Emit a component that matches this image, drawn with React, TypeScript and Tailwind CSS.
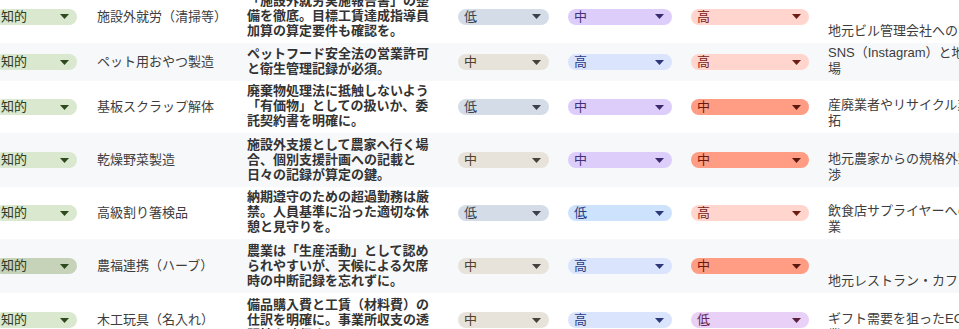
/**
 * Sheet-style task table with dropdown chips.
 * Rows alternate white / light gray; chips are pill dropdowns.
 */

type Tone = 'green' | 'greenDim' | 'slate' | 'beige' | 'violet' | 'blue' | 'sky' | 'rose' | 'coral' | 'orchid';

const tones: Record<Tone, { bg: string; fg: string; arrow: string }> = {
  green: { bg: 'bg-[#d9e8cf]', fg: 'text-[#2b3a22]', arrow: '#2d4a1c' },
  greenDim: { bg: 'bg-[#c7d3b9]', fg: 'text-[#2b3a22]', arrow: '#2d4a1c' },
  slate: { bg: 'bg-[#d4dde7]', fg: 'text-[#3b4552]', arrow: '#3b4049' },
  beige: { bg: 'bg-[#e7e3da]', fg: 'text-[#52402c]', arrow: '#45413c' },
  violet: { bg: 'bg-[#dccdfb]', fg: 'text-[#43307a]', arrow: '#3a2a6e' },
  blue: { bg: 'bg-[#dbe4fd]', fg: 'text-[#2b3c86]', arrow: '#2c3878' },
  sky: { bg: 'bg-[#cde3fd]', fg: 'text-[#2b3c86]', arrow: '#2c3878' },
  rose: { bg: 'bg-[#ffd5cd]', fg: 'text-[#7b2218]', arrow: '#6e1d14' },
  coral: { bg: 'bg-[#ff9c84]', fg: 'text-[#6a1b10]', arrow: '#5c170e' },
  orchid: { bg: 'bg-[#e8d0f6]', fg: 'text-[#6a2650]', arrow: '#5a1f3c' },
};

const Chip = ({ label, tone, width }: { label: string; tone: Tone; width: string }) => {
  const t = tones[tone];
  return (
    <div className={`flex h-4 items-center justify-between rounded-full pl-[6px] pr-[8px] ${t.bg} ${width}`}>
      <span className={`text-[13px] leading-4 ${t.fg}`}>{label}</span>
      <svg width="9" height="5" viewBox="0 0 9 5">
        <polygon points="0,0 9,0 4.5,5" fill={t.arrow} />
      </svg>
    </div>
  );
};

type Row = {
  h: string;
  cat: Tone;
  name: string;
  notes: string[];
  a: [string, Tone];
  b: [string, Tone];
  c: [string, Tone];
  plan: string[];
};

const rows: Row[] = [
  {
    h: 'h-[53px]',
    cat: 'green',
    name: '施設外就労（清掃等）',
    notes: ['「施設外就労実施報告書」の整', '備を徹底。目標工賃達成指導員', '加算の算定要件も確認を。'],
    a: ['低', 'slate'],
    b: ['中', 'violet'],
    c: ['高', 'rose'],
    plan: ['地元ビル管理会社への営業と定期契約の獲得'],
  },
  {
    h: 'h-[38px]',
    cat: 'green',
    name: 'ペット用おやつ製造',
    notes: ['ペットフード安全法の営業許可', 'と衛生管理記録が必須。'],
    a: ['中', 'beige'],
    b: ['高', 'blue'],
    c: ['高', 'rose'],
    plan: ['SNS（Instagram）と地域マルシェへの出店・直売市', '場'],
  },
  {
    h: 'h-[52px]',
    cat: 'green',
    name: '基板スクラップ解体',
    notes: ['廃棄物処理法に抵触しないよう', '「有価物」としての扱いか、委', '託契約書を明確に。'],
    a: ['低', 'slate'],
    b: ['中', 'violet'],
    c: ['中', 'coral'],
    plan: ['産廃業者やリサイクル業者との連携による販路開', '拓'],
  },
  {
    h: 'h-[54px]',
    cat: 'green',
    name: '乾燥野菜製造',
    notes: ['施設外支援として農家へ行く場', '合、個別支援計画への記載と', '日々の記録が算定の鍵。'],
    a: ['中', 'beige'],
    b: ['中', 'violet'],
    c: ['中', 'coral'],
    plan: ['地元農家からの規格外野菜の安定仕入れに向けた交', '渉'],
  },
  {
    h: 'h-[52px]',
    cat: 'green',
    name: '高級割り箸検品',
    notes: ['納期遵守のための超過勤務は厳', '禁。人員基準に沿った適切な休', '憩と見守りを。'],
    a: ['低', 'slate'],
    b: ['低', 'sky'],
    c: ['高', 'rose'],
    plan: ['飲食店サプライヤーへの営業と安定受注に向けた営', '業'],
  },
  {
    h: 'h-[54px]',
    cat: 'greenDim',
    name: '農福連携（ハーブ）',
    notes: ['農業は「生産活動」として認め', 'られやすいが、天候による欠席', '時の中断記録を忘れずに。'],
    a: ['中', 'beige'],
    b: ['高', 'blue'],
    c: ['中', 'coral'],
    plan: ['地元レストラン・カフェへの直接販売'],
  },
  {
    h: 'h-[54px]',
    cat: 'green',
    name: '木工玩具（名入れ）',
    notes: ['備品購入費と工賃（材料費）の', '仕訳を明確に。事業所収支の透', '明性を確保すること。'],
    a: ['中', 'beige'],
    b: ['高', 'blue'],
    c: ['低', 'orchid'],
    plan: ['ギフト需要を狙ったECサイトでの販売と法人向け営', '業'],
  },
];

export default function App() {
  return (
    <div
      className="h-[329px] w-[959px] overflow-hidden bg-white"
      style={{ fontFamily: '"Liberation Sans", "Noto Sans CJK JP", sans-serif' }}
    >
      <div className="-mt-[10px] w-[1200px]">
        {rows.map((r, i) => (
          <div
            key={i}
            className={`grid grid-cols-[87px_156px_210px_110px_123px_137px_1fr] ${r.h} ${i % 2 === 1 ? 'bg-[#f7f8fa]' : 'bg-white'}`}
          >
            {/* category */}
            <div className="flex items-center -ml-[5px]">
              <Chip label="知的" tone={r.cat} width="w-[82px]" />
            </div>

            {/* name */}
            <div className="flex items-center pl-[10px] text-[13px] text-[#3d3d3d] whitespace-nowrap">{r.name}</div>

            {/* notes */}
            <div className="flex flex-col justify-end pl-[4px] pb-[5px] text-[13px] leading-[15px] font-bold text-[#333333]">
              {r.notes.map((l, j) => (
                <span key={j} className="whitespace-nowrap">
                  {l}
                </span>
              ))}
            </div>

            <div className="flex items-center pl-[5px]">
              <Chip label={r.a[0]} tone={r.a[1]} width="w-[91px]" />
            </div>
            <div className="flex items-center pl-[5px]">
              <Chip label={r.b[0]} tone={r.b[1]} width="w-[104px]" />
            </div>
            <div className="flex items-center pl-[5px]">
              <Chip label={r.c[0]} tone={r.c[1]} width="w-[118px]" />
            </div>

            {/* plan */}
            <div className="flex flex-col justify-end pl-[5px] pb-[4px] text-[13px] leading-[16px] text-[#3d3d3d]">
              {r.plan.map((l, j) => (
                <span key={j} className="whitespace-nowrap">
                  {l}
                </span>
              ))}
            </div>
          </div>
        ))}
      </div>
    </div>
  );
}
